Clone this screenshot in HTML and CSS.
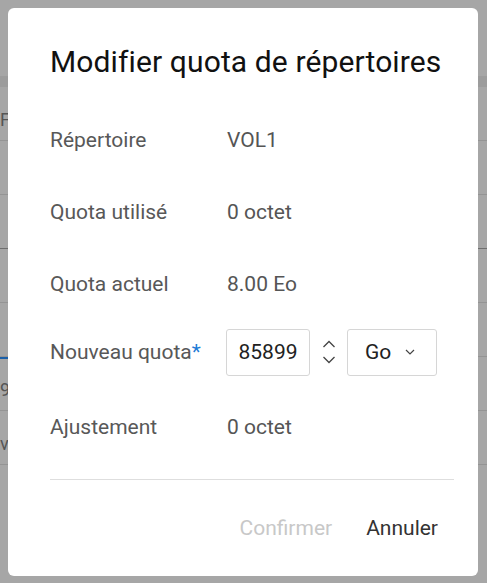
FILE: index.html
```html
<!DOCTYPE html>
<html lang="fr">
<head>
<meta charset="utf-8">
<link rel="stylesheet" href="styles.css">
</head>
<body>
<div class="page">
  <div class="bg-band"></div>
  <div class="bg-row"><span class="bg-text">Fa</span></div>
  <div class="bg-row"></div>
  <div class="bg-row dark"></div>
  <div class="bg-row"></div>
  <div class="bg-row"></div>
  <div class="bg-row blue"><span class="bg-text">9</span></div>
  <div class="bg-row"><span class="bg-text">v</span></div>
</div>
<div class="overlay">
  <div class="dialog">
    <h1 class="title">Modifier quota de répertoires</h1>
    <div class="rows">
      <div class="row"><span class="label">Répertoire</span><span class="value">VOL1</span></div>
      <div class="row"><span class="label">Quota utilisé</span><span class="value">0 octet</span></div>
      <div class="row"><span class="label">Quota actuel</span><span class="value">8.00 Eo</span></div>
      <div class="row row-input">
        <span class="label">Nouveau quota<span class="req">*</span></span>
        <div class="controls">
          <div class="num-input">85899</div>
          <div class="spinner">
            <svg width="14" height="10" viewBox="0 0 14 10"><path d="M1.5 8 L7 2.5 L12.5 8" fill="none" stroke="#444" stroke-width="1.3"/></svg>
            <svg width="14" height="10" viewBox="0 0 14 10"><path d="M1.5 2 L7 7.5 L12.5 2" fill="none" stroke="#444" stroke-width="1.3"/></svg>
          </div>
          <div class="select">
            <span>Go</span>
            <svg width="12" height="8" viewBox="0 0 12 8"><path d="M2 2 L6 6 L10 2" fill="none" stroke="#444" stroke-width="1.2"/></svg>
          </div>
        </div>
      </div>
      <div class="row"><span class="label">Ajustement</span><span class="value">0 octet</span></div>
    </div>
    <div class="divider"></div>
    <div class="actions">
      <button class="btn disabled">Confirmer</button>
      <button class="btn">Annuler</button>
    </div>
  </div>
</div>
</body>
</html>
```

FILE: styles.css
```css
* { box-sizing: border-box; }
html, body { margin: 0; padding: 0; }
body {
  width: 487px;
  height: 583px;
  overflow: hidden;
  background: #a6a6a6;
  font-family: Roboto, "Liberation Sans", sans-serif;
  position: relative;
}
.page {
  padding-top: 76px;
}
.bg-band {
  height: 11px;
  background: #9c9c9c;
}
.bg-row {
  height: 54px;
  border-bottom: 1px solid #949494;
  position: relative;
}
.bg-row.dark { border-bottom-color: #6f6f6f; }
.bg-row.blue::before {
  content: "";
  position: absolute;
  left: 0;
  top: 0;
  width: 40px;
  height: 2px;
  background: #1a5fa8;
}
.bg-text {
  position: absolute;
  left: 0;
  top: 22px;
  font-size: 18px;
  color: #555;
}
.overlay {
  position: absolute;
  inset: 0;
  padding: 8px 9px 7px 8px;
}
.dialog {
  background: #fff;
  border-radius: 6px;
  height: 568px;
  padding: 0 33px 0 42px;
  display: flex;
  flex-direction: column;
}
.title {
  margin: 36px 0 0 0;
  font-size: 30px;
  font-weight: 400;
  color: #111;
  line-height: 36px;
  letter-spacing: 0.12px;
}
.rows {
  margin-top: 24px;
  display: flex;
  flex-direction: column;
}
.row {
  height: 72px;
  display: flex;
  align-items: center;
  font-size: 21px;
}
.label {
  width: 177px;
  color: #585858;
}
.value {
  color: #555;
}
.req { color: #1e7bd6; }
.row-input { height: 64px; margin-bottom: 7px; }
.controls {
  display: flex;
  align-items: center;
  margin-left: -1px;
}
.num-input {
  width: 84px;
  height: 47px;
  border: 1px solid #d6d6d6;
  border-radius: 3px;
  display: flex;
  align-items: center;
  justify-content: center;
  font-size: 21px;
  color: #222;
}
.spinner {
  width: 37px;
  display: flex;
  flex-direction: column;
  align-items: center;
  gap: 6px;
}
.select {
  width: 90px;
  height: 47px;
  border: 1px solid #d6d6d6;
  border-radius: 3px;
  display: flex;
  align-items: center;
  padding-left: 17px;
  gap: 13px;
  font-size: 21px;
  color: #222;
}
.divider {
  margin-top: 16px;
  height: 1px;
  background: #dedede;
  width: 404px;
}
.actions {
  display: flex;
  justify-content: flex-end;
  gap: 34px;
  margin-top: 36px;
  padding-right: 7px;
}
.btn {
  border: none;
  background: none;
  padding: 0;
  font-family: inherit;
  font-size: 21px;
  color: #333;
  cursor: pointer;
}
.btn.disabled { color: #c8c8c8; }
```
